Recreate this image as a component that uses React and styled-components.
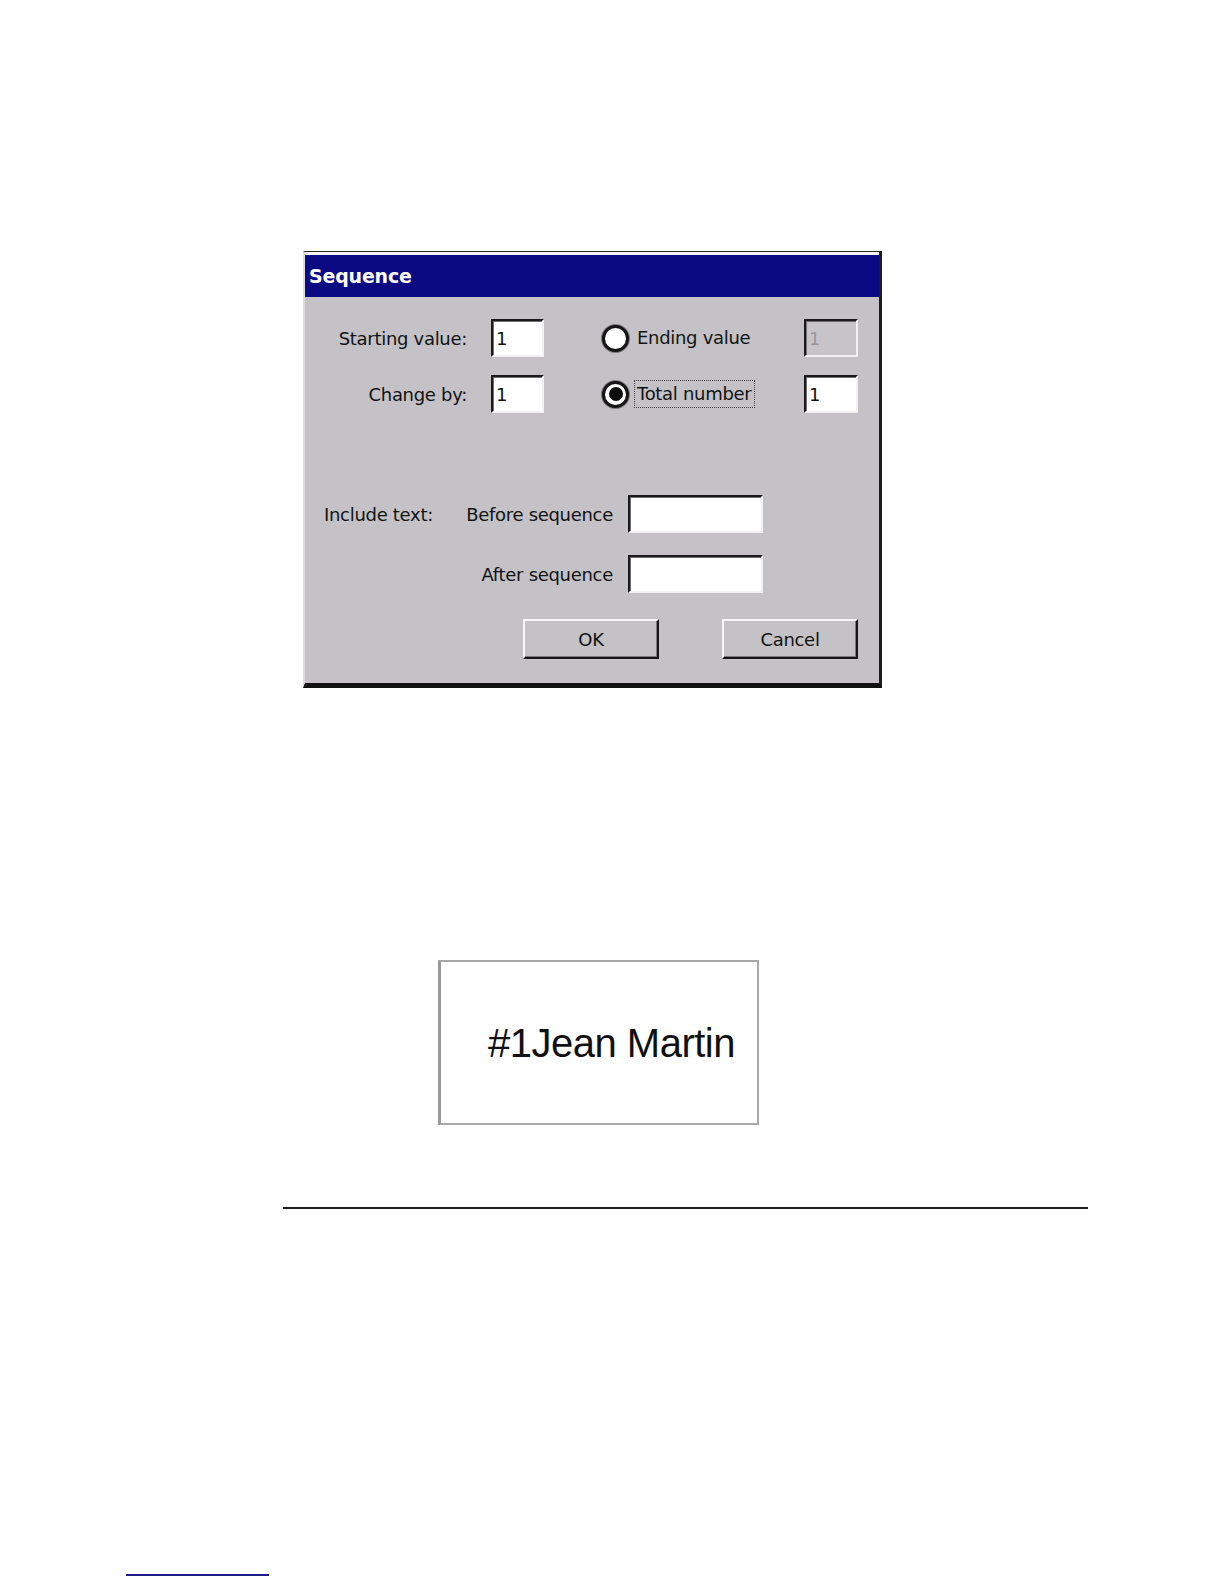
import React from 'react';
import styled, { createGlobalStyle } from 'styled-components';

const GlobalStyle = createGlobalStyle`
    html, body {
        margin: 0;
        padding: 0;
        background: #ffffff;
    }
    * {
        box-sizing: border-box;
    }
`;

// 대화상자 글꼴 (Tahoma 비슷하게)
const uiFont = `'DejaVu Sans', 'Liberation Sans', sans-serif`;

const Page = styled.div`
    width: 1224px;
    min-height: 1584px;
    display: flex;
    flex-direction: column;
    align-items: flex-start;
    padding-top: 251px;
`;

const Window = styled.div`
    margin-left: 303px;
    width: 579px;
    height: 437px;
    background: #c4c2c7;
    border-top: 1px solid #2a2a2a;
    border-left: 2px solid #dddbe0;
    border-right: 3px solid #1c1c1c;
    border-bottom: 5px solid #111111;
    display: flex;
    flex-direction: column;
    font-family: ${uiFont};
    font-size: 18px;
    letter-spacing: -0.3px;
    color: #121212;
`;

const TitleBar = styled.div`
    height: 45px;
    border-top: 3px solid #f4f4f6;
    background: #0b0a82;
    color: #ffffff;
    font-weight: bold;
    font-size: 19px;
    letter-spacing: -0.2px;
    display: flex;
    align-items: center;
    padding-left: 4px;
`;

const Body = styled.div`
    flex: 1;
    display: flex;
    flex-direction: column;
    padding: 22px 21px 0 0;
`;

const TopGrid = styled.div`
    display: grid;
    grid-template-columns: 186px 53px 1fr 54px;
    row-gap: 18px;
    align-items: center;
`;

const Label = styled.div`
    text-align: ${(p) => (p.$right ? 'right' : 'left')};
    padding-right: ${(p) => p.$pr || 0}px;
    white-space: nowrap;
`;

const Field = styled.div`
    height: 38px;
    width: ${(p) => p.$w || 53}px;
    background: ${(p) => (p.$disabled ? '#c6c4c9' : '#ffffff')};
    border-top: 2px solid #1a1a1a;
    border-left: 2px solid #1a1a1a;
    border-right: 2px solid #f2f2f4;
    border-bottom: 2px solid #f2f2f4;
    box-shadow: inset 1px 1px 0 #6e6e72;
    color: ${(p) => (p.$disabled ? '#9a989d' : '#111111')};
    display: flex;
    align-items: center;
    padding-left: 3px;
    font-size: 18px;
`;

const RadioRow = styled.div`
    display: flex;
    align-items: center;
    padding-left: 58px;
`;

const RadioCircle = styled.span`
    width: 27px;
    height: 27px;
    border-radius: 50%;
    background: #ffffff;
    border: 3px solid #141414;
    box-shadow: 0 0 0 1px #7a787d;
    display: flex;
    align-items: center;
    justify-content: center;
    flex-shrink: 0;
    &::after {
        content: '';
        display: ${(p) => (p.$checked ? 'block' : 'none')};
        width: 14px;
        height: 14px;
        border-radius: 50%;
        background: #0e0e0e;
    }
`;

const RadioText = styled.span`
    margin-left: 5px;
    padding: 2px 3px 3px 2px;
    border: 1px dotted ${(p) => (p.$focus ? '#3e3e3e' : 'transparent')};
    white-space: nowrap;
`;

const TextGrid = styled.div`
    margin-top: 82px;
    padding-left: 19px;
    display: grid;
    grid-template-columns: 130px 159px 135px;
    row-gap: 22px;
    align-items: center;
`;

const TextField = styled(Field)`
    margin-left: 15px;
`;

const Buttons = styled.div`
    margin-top: 26px;
    display: flex;
    justify-content: flex-end;
    gap: 63px;
`;

const Button = styled.div`
    width: 136px;
    height: 40px;
    background: #c4c2c7;
    border-top: 2px solid #f6f6f8;
    border-left: 2px solid #f6f6f8;
    border-right: 2px solid #161616;
    border-bottom: 2px solid #161616;
    box-shadow: inset -1px -1px 0 #7c7a80;
    display: flex;
    align-items: center;
    justify-content: center;
    font-size: 18px;
`;

const LabelPreview = styled.div`
    margin-top: 272px;
    margin-left: 438px;
    width: 321px;
    height: 165px;
    background: #ffffff;
    border: 2px solid #a8a8a8;
    border-left: 3px solid #9a9a9a;
    display: flex;
    align-items: center;
    padding-left: 47px;
    padding-top: 2px;
    font-family: 'Liberation Sans', Arial, sans-serif;
    font-size: 40px;
    letter-spacing: -0.5px;
    color: #111111;
`;

const Rule = styled.div`
    margin-top: 82px;
    margin-left: 283px;
    width: 805px;
    height: 2px;
    background: #1e1e1e;
`;

const FootRule = styled.div`
    margin-top: 365px;
    margin-left: 126px;
    width: 143px;
    height: 2px;
    background: #1c1c8c;
`;

const Radio = ({ checked, focus, children }) => (
    <RadioRow>
        <RadioCircle $checked={checked} />
        <RadioText $focus={focus}>{children}</RadioText>
    </RadioRow>
);

const App = () => {
    return (
        <>
            <GlobalStyle />
            <Page>
                <Window>
                    <TitleBar>Sequence</TitleBar>
                    <Body>
                        <TopGrid>
                            <Label $right $pr={24}>Starting value:</Label>
                            <Field>1</Field>
                            <Radio>Ending value</Radio>
                            <Field $w={54} $disabled>1</Field>

                            <Label $right $pr={24}>Change by:</Label>
                            <Field>1</Field>
                            <Radio checked focus>Total number</Radio>
                            <Field $w={54}>1</Field>
                        </TopGrid>

                        <TextGrid>
                            <Label>Include text:</Label>
                            <Label $right>Before sequence</Label>
                            <TextField $w={135} />

                            <div />
                            <Label $right>After sequence</Label>
                            <TextField $w={135} />
                        </TextGrid>

                        <Buttons>
                            <Button>OK</Button>
                            <Button>Cancel</Button>
                        </Buttons>
                    </Body>
                </Window>

                <LabelPreview>#1Jean Martin</LabelPreview>

                <Rule />
                <FootRule />
            </Page>
        </>
    );
};

export default App;
